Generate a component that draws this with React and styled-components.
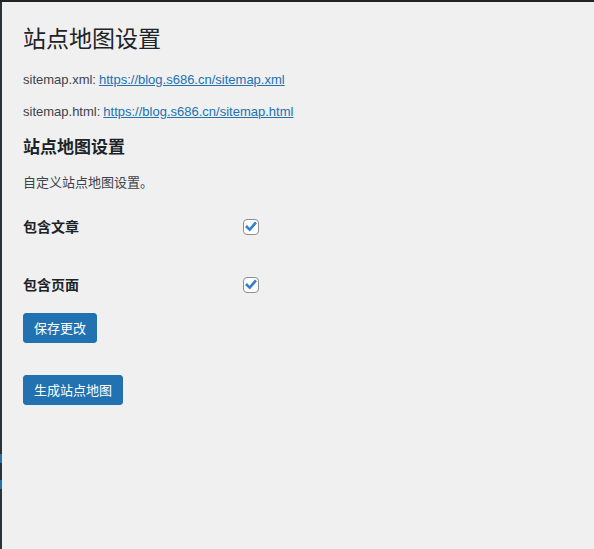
import styled, { createGlobalStyle } from "styled-components";

const GlobalStyle = createGlobalStyle`
  html, body {
    margin: 0;
    padding: 0;
    background: #f0f0f1;
  }
  body {
    font-family: "Liberation Sans", "Noto Sans CJK SC", sans-serif;
    color: #3c434a;
    font-size: 13px;
  }
`;

export default function App() {
  return (
    <>
      <GlobalStyle />
      <PageStyled>
        <div className="top-bar" />
        <div className="body">
          <AdminEdge>
            <span className="marker first" />
            <span className="marker" />
          </AdminEdge>
          <Wrap>
            <h1>站点地图设置</h1>
            <p>
              sitemap.xml: <a href="#">https://blog.s686.cn/sitemap.xml</a>
            </p>
            <p>
              sitemap.html: <a href="#">https://blog.s686.cn/sitemap.html</a>
            </p>
            <h2>站点地图设置</h2>
            <p className="description">自定义站点地图设置。</p>
            <FormTable>
              <FormRow>
                <label>包含文章</label>
                <Checkbox checked />
              </FormRow>
              <FormRow>
                <label>包含页面</label>
                <Checkbox checked />
              </FormRow>
            </FormTable>
            <PrimaryButton>保存更改</PrimaryButton>
            <PrimaryButton $spaced>生成站点地图</PrimaryButton>
          </Wrap>
        </div>
      </PageStyled>
    </>
  );
}

function Checkbox({ checked }) {
  return (
    <CheckboxStyled>
      {checked && (
        <svg viewBox="0 0 20 20" width="16" height="16">
          <path
            d="M4.2 10 L8.2 13.8 L15.8 5"
            fill="none"
            stroke="#3582c4"
            strokeWidth="3.8"
            strokeLinecap="square"
            strokeLinejoin="miter"
          />
        </svg>
      )}
    </CheckboxStyled>
  );
}

const PageStyled = styled.div`
  min-height: 549px;
  display: flex;
  flex-direction: column;
  .top-bar {
    height: 2px;
    background: #1d2327;
  }
  .body {
    flex: 1;
    display: flex;
  }
`;

const AdminEdge = styled.div`
  width: 2px;
  background: #2c3338;
  display: flex;
  flex-direction: column;
  .marker {
    width: 2px;
    height: 9px;
    background: #2271b1;
    margin-top: 17px;
  }
  .marker.first {
    margin-top: 452px;
  }
`;

const Wrap = styled.div`
  flex: 1;
  padding: 0 20px 0 21px;
  display: flex;
  flex-direction: column;
  align-items: flex-start;
  h1 {
    margin: 20px 0 0;
    font-family: "Noto Sans CJK SC", sans-serif;
    font-size: 23px;
    font-weight: 400;
    line-height: 30px;
    color: #1d2327;
  }
  p {
    margin: 0;
    height: 32px;
    line-height: 19px;
    display: flex;
    align-items: center;
  }
  h1 + p {
    margin-top: 11px;
  }
  p a {
    color: #2271b1;
    text-decoration: underline;
    margin-left: 3px;
  }
  h2 {
    margin: 8px 0 0;
    font-family: "Noto Sans CJK SC", sans-serif;
    font-size: 17px;
    font-weight: 700;
    line-height: 22px;
    color: #1d2327;
  }
  p.description {
    margin-top: 12px;
    height: 24px;
    font-family: "Noto Sans CJK SC", sans-serif;
    font-size: 13px;
  }
`;

const FormTable = styled.div`
  width: 100%;
  margin-top: 4px;
  display: flex;
  flex-direction: column;
`;

const FormRow = styled.div`
  height: 58px;
  display: grid;
  grid-template-columns: 220px auto;
  align-items: center;
  label {
    font-family: "Noto Sans CJK SC", sans-serif;
    font-size: 14px;
    font-weight: 700;
    color: #1d2327;
  }
`;

const CheckboxStyled = styled.span`
  width: 16px;
  height: 16px;
  box-sizing: border-box;
  border: 1px solid #8c8f94;
  border-radius: 4px;
  background: #fff;
  display: flex;
  align-items: center;
  justify-content: center;
  margin-top: 2px;
`;

const PrimaryButton = styled.button`
  height: 30px;
  padding: 0 10px;
  margin-top: ${({ $spaced }) => ($spaced ? "32px" : "0")};
  background: #2271b1;
  border: 1px solid #2271b1;
  border-radius: 3px;
  color: #fff;
  font-family: "Noto Sans CJK SC", sans-serif;
  font-size: 13px;
  line-height: 28px;
  cursor: pointer;
`;
